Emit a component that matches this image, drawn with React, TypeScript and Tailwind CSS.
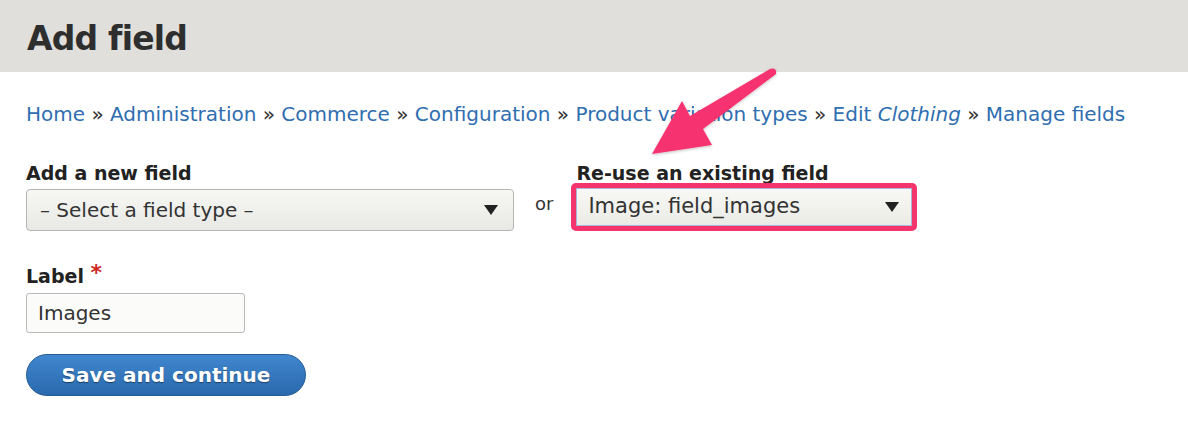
import React from "react"

const font = { fontFamily: '"DejaVu Sans", "Liberation Sans", sans-serif' }

function Caret() {
  return (
    <svg width="14" height="10" viewBox="0 0 14 10" className="shrink-0">
      <path d="M0 0 H14 L7 10 Z" fill="#222" />
    </svg>
  )
}

function Crumb({ children }: { children: React.ReactNode }) {
  return <a className="text-[#2f6eb0] no-underline">{children}</a>
}

export default function App() {
  return (
    <div className="relative w-[1188px] h-[432px] bg-white overflow-hidden text-[#222]" style={font}>
      <header className="h-[72px] bg-[#e0dfdb] px-[27px] flex items-center">
        <h1 className="text-[33px] font-bold text-[#2e2e2e] tracking-[-0.8px] pt-[6px]">Add field</h1>
      </header>

      <div className="px-[26px]">
        {/* Breadcrumb */}
        <nav className="mt-[27px] text-[20px] leading-[30px] text-[#333]">
          <Crumb>Home</Crumb> » <Crumb>Administration</Crumb> » <Crumb>Commerce</Crumb> »{" "}
          <Crumb>Configuration</Crumb> » <Crumb>Product variation types</Crumb> »{" "}
          <Crumb>
            Edit <em>Clothing</em>
          </Crumb>{" "}
          » <Crumb>Manage fields</Crumb>
        </nav>

        {/* Field choices */}
        <div className="mt-[31px] flex items-end">
          <div className="flex flex-col">
            <label className="text-[19px] font-bold leading-[26px]">Add a new field</label>
            <div className="mt-[3px] w-[488px] h-[42px] rounded-[4px] border border-[#b5b5b3] bg-gradient-to-b from-[#f7f7f4] to-[#e8e8e4] flex items-center justify-between pl-[13px] pr-[15px] text-[20px] text-[#333]">
              <span>– Select a field type –</span>
              <Caret />
            </div>
          </div>
          <span className="ml-[21px] mb-[14px] text-[18px] text-[#333]">or</span>
          <div className="ml-[18px] flex flex-col">
            <label className="ml-[5px] text-[19px] font-bold leading-[26px]">Re-use an existing field</label>
            <div className="mt-[-3px] rounded-[5px] border-[5px] border-[#f3346d] bg-[#f3346d]">
              <div className="w-[336px] h-[38px] border border-[#a9b6d8] bg-gradient-to-b from-[#f8f8f5] to-[#ebebe6] flex items-center justify-between pl-[11px] pr-[12px] text-[21px] text-[#333]">
                <span>Image: field_images</span>
                <Caret />
              </div>
            </div>
          </div>
        </div>

        {/* Label */}
        <div className="mt-[32px] flex flex-col">
          <label className="text-[19px] font-bold leading-[26px]">
            Label <span className="text-[#d0281e] text-[22px] leading-[20px] align-top">*</span>
          </label>
          <div className="mt-[4px] w-[219px] h-[40px] rounded-[3px] border border-[#b8b8b8] bg-[#fbfbf9] flex items-center px-[11px] text-[20px] text-[#333]">
            Images
          </div>
        </div>

        <button className="mt-[21px] w-[280px] h-[42px] rounded-full border border-[#255d95] bg-gradient-to-b from-[#4087cf] to-[#2a69ad] text-white text-[20px] font-bold [text-shadow:0_1px_1px_rgba(0,0,0,0.45)]">
          Save and continue
        </button>
      </div>

      {/* Annotation arrow */}
      <svg className="absolute left-0 top-0 pointer-events-none" width="1188" height="432">
        <defs>
          <filter id="sh" x="-20%" y="-20%" width="140%" height="140%">
            <feDropShadow dx="0" dy="1" stdDeviation="1.5" floodColor="#000" floodOpacity="0.25" />
          </filter>
        </defs>
        <path
          d="M652 154 L682 101 L690 116 L770 69 Q777 67 776 74 L703 129 L712 145 Z"
          fill="#f7336f"
          filter="url(#sh)"
        />
      </svg>
    </div>
  )
}
